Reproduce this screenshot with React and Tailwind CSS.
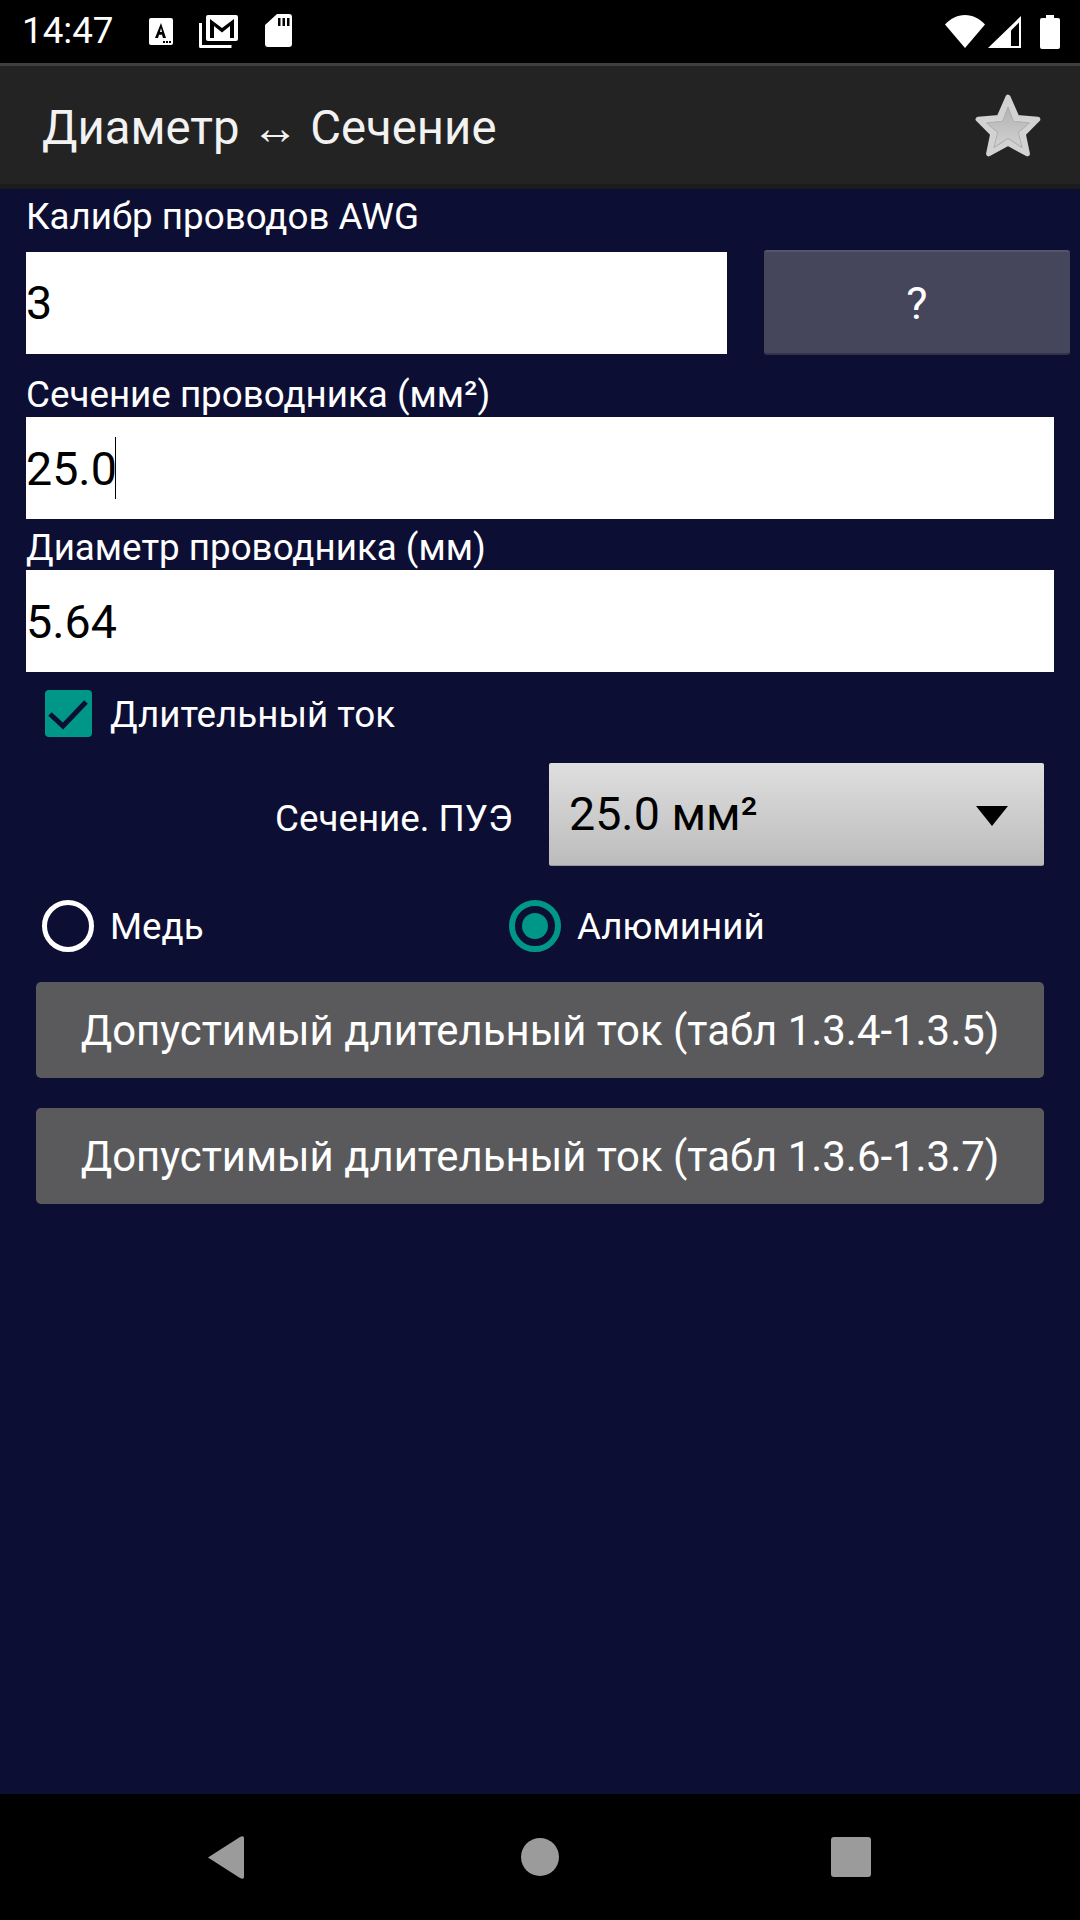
import React from 'react';

const font = { fontFamily: 'Roboto, "Noto Sans", sans-serif' };

const StatusBar = () => (
  <div className="h-[63px] shrink-0 bg-black flex items-center text-white relative">
    <span className="ml-[22px] text-[36.75px] leading-none w-[127px]">14:47</span>
    <svg width="24" height="27" viewBox="0 0 24 27" className="mt-[-1px]">
      <path d="M2 0h20a2 2 0 0 1 2 2v23a2 2 0 0 1-2 2H2a2 2 0 0 1-2-2V2a2 2 0 0 1 2-2z" fill="#fff" />
      <path d="M12 5l5 15h-3l-1-3.200h-3L9 20H6zM11 14h2l-1-4z" fill="#000" />
      <path d="M14 23h2v2h-2zM17 23h2v2h-2zM20 23h2v2h-2z" fill="#000" />
    </svg>
    <svg width="40" height="34" viewBox="0 0 40 34" className="ml-[26px] mt-[-2px]">
      <rect x="7" y="1" width="32" height="26" rx="2" fill="#fff" />
      <path d="M11 5l12 9 12-9v19h-4V12l-8 6.500-8-6.500v12h-4z" fill="#000" />
      <path d="M1.500 9v23.500h31" fill="none" stroke="#fff" strokeWidth="3" strokeLinejoin="round" />
    </svg>
    <svg width="27" height="33" viewBox="0 0 27 33" className="ml-[26px] mt-[-2px]">
      <path d="M12 0h12a3 3 0 0 1 3 3v27a3 3 0 0 1-3 3H3a3 3 0 0 1-3-3V11z" fill="#fff" />
      <path d="M13 4h2.500v8H13zM17.500 4H20v8h-2.500zM22 4h2.500v8H22z" fill="#000" />
    </svg>
    <svg width="40" height="33" viewBox="0 0 40 33" className="ml-auto">
      <path d="M20 33L0 9.500C5 4 12 0 20 0s15 4 20 9.500z" fill="#fff" />
    </svg>
    <svg width="33" height="32" viewBox="0 0 33 32" className="ml-[3px]">
      <path d="M33 0v32H0z" fill="#fff" />
      <path d="M23 14.500l8-8V30h-8z" fill="#000" />
    </svg>
    <svg width="20" height="34" viewBox="0 0 20 34" className="ml-[19px] mr-[20px]">
      <path d="M6 0h8v3h4a2 2 0 0 1 2 2v27a2 2 0 0 1-2 2H2a2 2 0 0 1-2-2V5a2 2 0 0 1 2-2h4z" fill="#fff" />
    </svg>
  </div>
);

const Star = () => (
  <svg width="70" height="67" viewBox="0 0 67 64" className="mr-[37px] blur-[0.6px]">
    <defs>
      <linearGradient id="starFill" x1="0" y1="0" x2="0" y2="1">
        <stop offset="0" stopColor="#b0b0b0" />
        <stop offset="1" stopColor="#d2d2d2" />
      </linearGradient>
    </defs>
    <path
      d="M33.500 5L42 24.500 62 26 48 40l4 19-18.500-10L15 59l4-19L5 26l20-1.500z"
      fill="#d6d6d6"
      stroke="#d2d2d2"
      strokeWidth="5"
      strokeLinejoin="round"
    />
    <path
      d="M33.500 14L39 28l15 1.500-10.500 9L47 53l-13.500-8.500L20 53l3.500-14.500L13 29.500 28 28z"
      fill="url(#starFill)"
      stroke="#b0b0b0"
      strokeWidth="1"
      strokeLinejoin="round"
    />
  </svg>
);

const AppBar = () => (
  <div className="h-[126px] shrink-0 bg-[#232323] border-t-[3px] border-t-[#3f3f3f] border-b-[5px] border-b-[#1c1c1e] flex items-center justify-between">
    <span className="ml-[42px] mt-[7px] text-[47.25px] leading-none text-[#f2f2f2]">Диаметр ↔ Сечение</span>
    <Star />
  </div>
);

const Label = ({ children, className = '' }) => (
  <div className={`text-[36.75px] leading-[42px] text-white ${className}`}>{children}</div>
);

const Field = ({ value, caret, className = '' }) => (
  <div className={`h-[102px] bg-white flex items-center text-[46.6px] text-black ${className}`}>
    <span className="mt-[3px]">{value}</span>
    {caret && <span className="ml-[-2px] w-px h-[62px] bg-black" />}
  </div>
);

const Radio = ({ checked }) =>
  checked ? (
    <span className="w-[52px] h-[52px] rounded-full border-[6px] border-[#009688] flex items-center justify-center">
      <span className="w-[26px] h-[26px] rounded-full bg-[#009688]" />
    </span>
  ) : (
    <span className="w-[52px] h-[52px] rounded-full border-[5px] border-white" />
  );

const WideButton = ({ children, className = '' }) => (
  <div className={`h-[96px] ml-[36px] w-[1008px] rounded-[5px] bg-[#5a5a5c] text-white text-[41.9px] flex items-center justify-center ${className}`}>
    <span className="mt-[2px]">{children}</span>
  </div>
);

const NavBar = () => (
  <div className="h-[126px] shrink-0 bg-black flex items-center">
    <svg width="38" height="43" viewBox="0 0 38 43" className="ml-[207px]">
      <path d="M1 21.500L33 1q4-2 4 1v39q0 3-4 1z" fill="#9b9b9b" />
    </svg>
    <span className="ml-[276px] w-[38px] h-[38px] rounded-full bg-[#9b9b9b]" />
    <span className="ml-[272px] w-[40px] h-[40px] rounded-[3px] bg-[#9b9b9b]" />
  </div>
);

export default function App() {
  return (
    <div className="w-[1080px] h-[1920px] flex flex-col bg-[#0c0e33] overflow-hidden" style={font}>
      <StatusBar />
      <AppBar />

      <div className="flex-1 flex flex-col">
        <div className="pl-[26px]">
          <Label className="mt-[7px]">Калибр проводов AWG</Label>
          <div className="flex items-center mt-[12px]">
            <Field value="3" className="w-[701px]" />
            <div className="ml-[37px] w-[306px] h-[105px] rounded-[3px] bg-[#45455c] border-t-2 border-t-[#55556a] border-b-2 border-b-[#33334a] flex items-center justify-center text-white text-[45px]">
              <span className="mt-[3px]">?</span>
            </div>
          </div>
          <Label className="mt-[19px] pb-[1px]">Сечение проводника (мм²)</Label>
          <Field value="25.0" caret className="w-[1028px]" />
          <Label className="mt-[8px] pb-[1px]">Диаметр проводника (мм)</Label>
          <Field value="5.64" className="w-[1028px]" />
        </div>

        <div className="flex items-center mt-[18px] ml-[45px]">
          <span className="w-[47px] h-[47px] rounded-[4px] bg-[#009688]">
            <svg width="47" height="47" viewBox="0 0 47 47">
              <path d="M5 24l13 12L41 12" fill="none" stroke="#0c0e33" strokeWidth="5" />
            </svg>
          </span>
          <span className="ml-[18px] mt-[4px] text-[36.75px] leading-none text-white">Длительный ток</span>
        </div>

        <div className="flex items-center mt-[26px] ml-[275px]">
          <span className="text-[36.75px] text-white w-[274px] mt-[9px]">Сечение. ПУЭ</span>
          <div className="w-[495px] h-[103px] rounded-[2px] bg-linear-to-b from-[#dfdfdf] to-[#bcbcbc] border-b border-b-[#999999] flex items-center justify-between">
            <span className="ml-[20px] mt-[2px] text-[46.6px] text-black">25.0 мм²</span>
            <svg width="32" height="20" viewBox="0 0 32 20" className="mr-[36px] mt-[4px]">
              <path d="M0 0h32L16 20z" fill="#000" />
            </svg>
          </div>
        </div>

        <div className="flex items-center mt-[31px]">
          <div className="flex items-center ml-[42px] w-[467px]">
            <Radio />
            <span className="ml-[16px] mt-[2px] text-[36.75px] text-white">Медь</span>
          </div>
          <Radio checked />
          <span className="ml-[16px] mt-[2px] text-[36.75px] text-white">Алюминий</span>
        </div>

        <WideButton className="mt-[28px]">Допустимый длительный ток (табл 1.3.4-1.3.5)</WideButton>
        <WideButton className="mt-[30px]">Допустимый длительный ток (табл 1.3.6-1.3.7)</WideButton>
      </div>

      <NavBar />
    </div>
  );
}
